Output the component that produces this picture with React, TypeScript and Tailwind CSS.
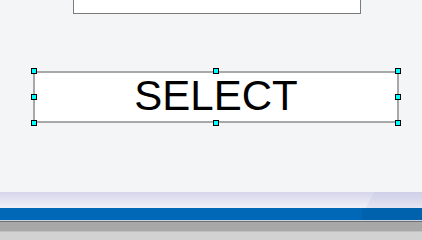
export default function App() {
  const handles = [
    'left-[-4px] top-[-5px]',
    'left-[178px] top-[-5px]',
    'right-[-4px] top-[-5px]',
    'left-[-4px] top-[21px]',
    'right-[-4px] top-[21px]',
    'left-[-4px] bottom-[-5px]',
    'left-[178px] bottom-[-5px]',
    'right-[-4px] bottom-[-5px]',
  ]

  return (
    <div className="w-[422px] h-[240px] overflow-hidden flex flex-col bg-[#f4f5f7] font-['Liberation_Sans',Arial,sans-serif]">
      {/* top box, cut off by the window edge */}
      <div className="ml-[73px] w-[288px] h-[14px] shrink-0 bg-white border-x border-b border-[#7c7c7c]" />

      {/* selected text object */}
      <div className="mt-[57px] ml-[33px] w-[366px] h-[52px] shrink-0 relative border-2 border-[#a8a8a8] bg-white flex justify-center pt-[2px]">
        <span className="text-[42px] leading-none text-black">SELECT</span>
        {handles.map((pos) => (
          <div
            key={pos}
            className={`absolute w-[6px] h-[6px] bg-[#00ffff] border border-black ${pos}`}
          />
        ))}
      </div>

      <div className="flex-1" />

      {/* bottom bars */}
      <div className="h-[16px] shrink-0 bg-gradient-to-b from-[#d6d6ec] to-[#f0f1f8] flex justify-end">
        <div className="w-[56px] h-full bg-gradient-to-b from-[#cfcfe8] to-[#e4e4f2] [clip-path:polygon(8px_0,100%_0,100%_100%,0_100%)]" />
      </div>
      <div className="h-[12px] shrink-0 bg-[#0068b6] flex justify-end">
        <div className="w-[60px] h-full bg-[#0062ac]" />
      </div>
      <div className="h-px shrink-0 bg-[#c8d4e4]" />
      <div className="h-px shrink-0 bg-[#707070]" />
      <div className="h-[9px] shrink-0 bg-[#a8a8a8]" />
      <div className="h-px shrink-0 bg-[#c0c0c0]" />
      <div className="h-[8px] shrink-0 bg-[#d2d2d2]" />
    </div>
  )
}
